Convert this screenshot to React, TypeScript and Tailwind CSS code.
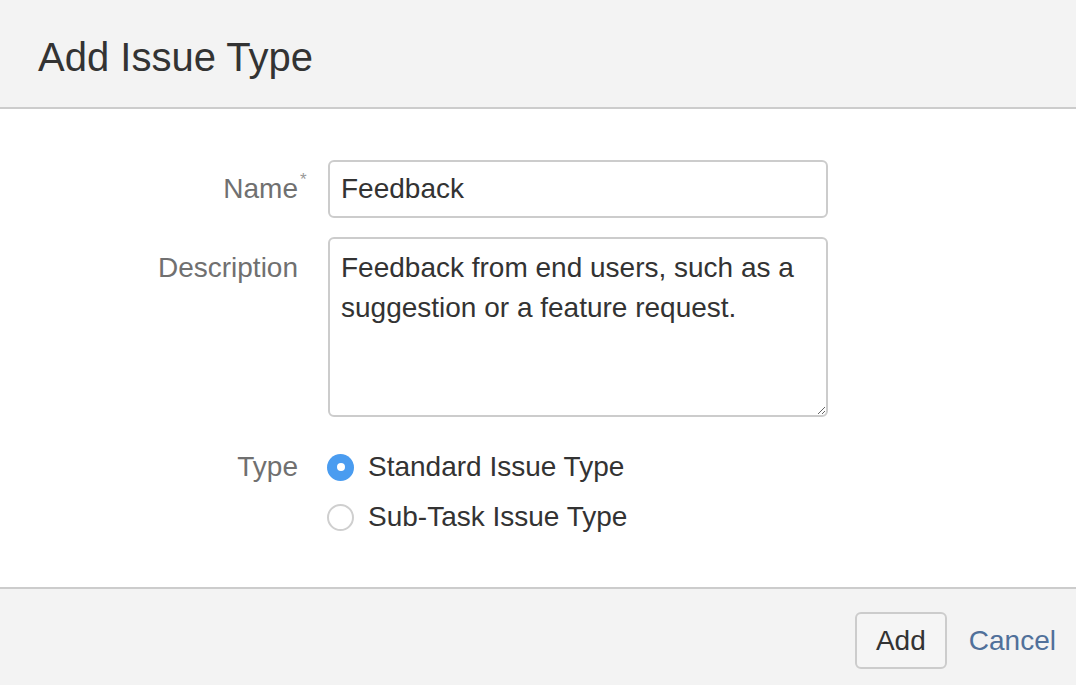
import React from "react";

const Radio = ({ checked, label }: { checked?: boolean; label: string }) => {
    return (
        <label className="flex items-center h-[50px] gap-[14px] cursor-pointer">
            {checked ? (
                <span className="w-[27px] h-[27px] rounded-full bg-[#4a9cf0] flex items-center justify-center">
                    <span className="w-[8px] h-[8px] rounded-full bg-white"></span>
                </span>
            ) : (
                <span className="w-[27px] h-[27px] rounded-full border-2 border-[#cfcfcf] bg-white"></span>
            )}
            <span className="text-[28px] text-[#333333]">{label}</span>
        </label>
    );
};

export default function App() {
    return (
        <div
            className="w-full h-[685px] flex flex-col bg-white"
            style={{ fontFamily: '"Liberation Sans", Arial, sans-serif' }}
        >
            <header className="h-[109px] shrink-0 bg-[#f3f3f3] border-b-2 border-[#cccccc] flex items-center pt-[6px] px-[38px]">
                <h1 className="text-[40px] text-[#333333] leading-none">Add Issue Type</h1>
            </header>

            <div className="flex-1 flex flex-col pt-[51px] gap-[19px]">
                <div className="flex items-center">
                    <div className="w-[298px] shrink-0 text-right text-[28px] text-[#707070]">
                        <span className="relative">
                            Name
                            <span className="absolute left-full -top-[6px] ml-[2px] text-[17px] text-[#999999]">*</span>
                        </span>
                    </div>
                    <input
                        readOnly
                        value="Feedback"
                        className="ml-[30px] w-[500px] h-[58px] border-2 border-[#cccccc] rounded-[6px] px-[11px] text-[28px] text-[#333333] outline-none"
                        style={{ fontFamily: '"Liberation Sans", Arial, sans-serif' }}
                    />
                </div>

                <div className="flex items-start">
                    <div className="w-[298px] shrink-0 text-right text-[28px] text-[#707070] leading-[40px] pt-[11px]">
                        Description
                    </div>
                    <textarea
                        readOnly
                        value="Feedback from end users, such as a suggestion or a feature request."
                        className="ml-[30px] w-[500px] h-[180px] border-2 border-[#cccccc] rounded-[6px] px-[11px] pt-[9px] text-[28px] leading-[40px] text-[#333333] outline-none resize-y"
                        style={{ fontFamily: '"Liberation Sans", Arial, sans-serif' }}
                    />
                </div>

                <div className="flex items-start pt-[6px]">
                    <div className="w-[298px] shrink-0 text-right text-[28px] text-[#707070] leading-[50px]">
                        Type
                    </div>
                    <div className="ml-[29px] flex flex-col">
                        <Radio checked label="Standard Issue Type" />
                        <Radio label="Sub-Task Issue Type" />
                    </div>
                </div>
            </div>

            <footer className="h-[98px] shrink-0 bg-[#f3f3f3] border-t-2 border-[#cccccc] flex items-start justify-end pt-[23px] pr-[20px] gap-[22px]">
                <button className="w-[92px] h-[57px] border-2 border-[#cccccc] rounded-[6px] bg-[#f5f5f5] text-[28px] text-[#333333]">
                    Add
                </button>
                <a href="#" className="h-[57px] flex items-center text-[28px] text-[#50709a]">
                    Cancel
                </a>
            </footer>
        </div>
    );
}
